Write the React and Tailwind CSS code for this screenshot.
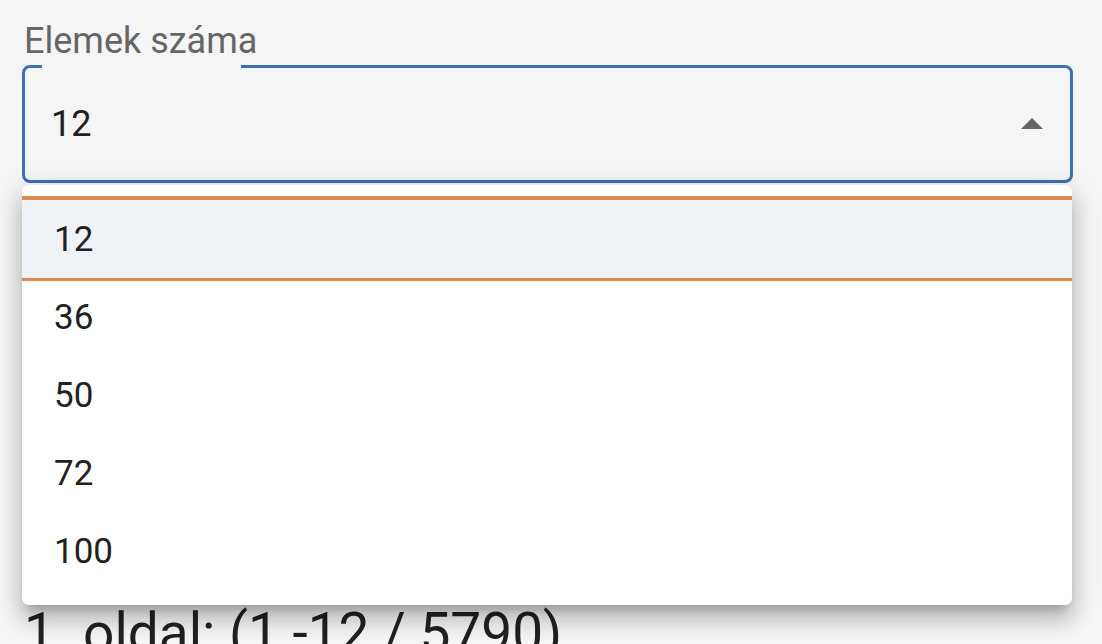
import React from "react";

const options = ["12", "36", "50", "72", "100"];

export default function App() {
  return (
    <div
      className="h-[644px] w-[1102px] overflow-hidden bg-[#f5f5f5] px-[22px] pt-[23px] text-[#212121]"
      style={{ fontFamily: "Roboto, 'Noto Sans', Arial, sans-serif" }}
    >
      <div className="pl-[2px] text-[36px] leading-[36px] text-[#666666]">Elemek száma</div>
      <div className="relative mt-[6px]">
        <div className="relative flex h-[118px] w-[1051px] items-center justify-between rounded-[8px] border-[3px] border-[#3d70b6] pl-[26px] pr-[27px]">
          <span className="absolute left-[17px] top-[-3px] h-[3px] w-[199px] bg-[#f5f5f5]" />
          <span className="text-[36px] leading-none text-[#212121]">12</span>
          <svg width="22" height="11" viewBox="0 0 22 11" className="mt-[-2px]">
            <path d="M0 11 L11 0 L22 11 Z" fill="#666666" />
          </svg>
        </div>
        <div className="absolute left-0 top-[120px] z-10 w-[1050px] rounded-[7px] bg-white py-[15px] shadow-[0_10px_10px_-6px_rgba(0,0,0,0.2),0_16px_20px_2px_rgba(0,0,0,0.14),0_6px_28px_4px_rgba(0,0,0,0.12)]">
          {options.map((o, i) => (
            <div
              key={o}
              className={
                i === 0
                  ? "relative flex h-[78px] items-center bg-[#eff3f8] pl-[32px] text-[35px] leading-none text-[#212121] shadow-[0_-4px_0_0_#e0894b,0_3px_0_0_#e0894b]"
                  : "flex h-[78px] items-center pl-[32px] text-[35px] leading-none text-[#212121]"
              }
            >
              {o}
            </div>
          ))}
        </div>
      </div>
      <div className="mt-[417px] whitespace-nowrap pl-[2px] text-[55px] leading-[1.2] text-[#212121]">
        1. oldal: (1 -12 / 5790)
      </div>
    </div>
  );
}
